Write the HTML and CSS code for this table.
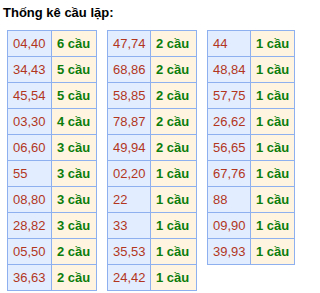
FILE: index.html
```html
<!DOCTYPE html>
<html>
<head>
<meta charset="utf-8">
<link rel="stylesheet" href="styles.css">
</head>
<body>
<div class="title">Thống kê cầu lặp:</div>
<div class="tables">
  <table class="tk t1">
    <tr><td class="num">04,40</td><td class="cnt">6 cầu</td></tr>
    <tr><td class="num">34,43</td><td class="cnt">5 cầu</td></tr>
    <tr><td class="num">45,54</td><td class="cnt">5 cầu</td></tr>
    <tr><td class="num">03,30</td><td class="cnt">4 cầu</td></tr>
    <tr><td class="num">06,60</td><td class="cnt">3 cầu</td></tr>
    <tr><td class="num">55</td><td class="cnt">3 cầu</td></tr>
    <tr><td class="num">08,80</td><td class="cnt">3 cầu</td></tr>
    <tr><td class="num">28,82</td><td class="cnt">3 cầu</td></tr>
    <tr><td class="num">05,50</td><td class="cnt">2 cầu</td></tr>
    <tr><td class="num">36,63</td><td class="cnt">2 cầu</td></tr>
  </table>
  <table class="tk t2">
    <tr><td class="num">47,74</td><td class="cnt">2 cầu</td></tr>
    <tr><td class="num">68,86</td><td class="cnt">2 cầu</td></tr>
    <tr><td class="num">58,85</td><td class="cnt">2 cầu</td></tr>
    <tr><td class="num">78,87</td><td class="cnt">2 cầu</td></tr>
    <tr><td class="num">49,94</td><td class="cnt">2 cầu</td></tr>
    <tr><td class="num">02,20</td><td class="cnt">1 cầu</td></tr>
    <tr><td class="num">22</td><td class="cnt">1 cầu</td></tr>
    <tr><td class="num">33</td><td class="cnt">1 cầu</td></tr>
    <tr><td class="num">35,53</td><td class="cnt">1 cầu</td></tr>
    <tr><td class="num">24,42</td><td class="cnt">1 cầu</td></tr>
  </table>
  <table class="tk t3">
    <tr><td class="num">44</td><td class="cnt">1 cầu</td></tr>
    <tr><td class="num">48,84</td><td class="cnt">1 cầu</td></tr>
    <tr><td class="num">57,75</td><td class="cnt">1 cầu</td></tr>
    <tr><td class="num">26,62</td><td class="cnt">1 cầu</td></tr>
    <tr><td class="num">56,65</td><td class="cnt">1 cầu</td></tr>
    <tr><td class="num">67,76</td><td class="cnt">1 cầu</td></tr>
    <tr><td class="num">88</td><td class="cnt">1 cầu</td></tr>
    <tr><td class="num">09,90</td><td class="cnt">1 cầu</td></tr>
    <tr><td class="num">39,93</td><td class="cnt">1 cầu</td></tr>
  </table>
</div>
</body>
</html>
```
FILE: styles.css
```css
html, body {
  margin: 0;
  padding: 0;
  background: #ffffff;
  font-family: "Liberation Sans", Arial, sans-serif;
}
.title {
  font-size: 13px;
  font-weight: bold;
  color: #000000;
  padding: 5px 0 0 3px;
  line-height: 16px;
  height: 30px;
  box-sizing: border-box;
}
.tables {
  display: flex;
  align-items: flex-start;
  gap: 10px;
  padding-left: 7px;
}
.tk {
  border-collapse: collapse;
  border: 1px solid #8fb0ef;
  font-size: 13px;
}
.tk td {
  border: 1px solid #8fb0ef;
  height: 26px;
  padding: 0 0 0 5px;
  text-align: left;
  vertical-align: middle;
  box-sizing: border-box;
}
.t1 .num { width: 44px; }
.t1 .cnt { width: 45px; }
.t2 .num { width: 43px; }
.t2 .cnt { width: 46px; }
.t3 .num { width: 43px; }
.t3 .cnt { width: 44px; }
.num {
  background: #e2eeff;
  color: #b2361e;
}
.cnt {
  background: #fff4e0;
  color: #0c7d0c;
  font-weight: bold;
}
```
